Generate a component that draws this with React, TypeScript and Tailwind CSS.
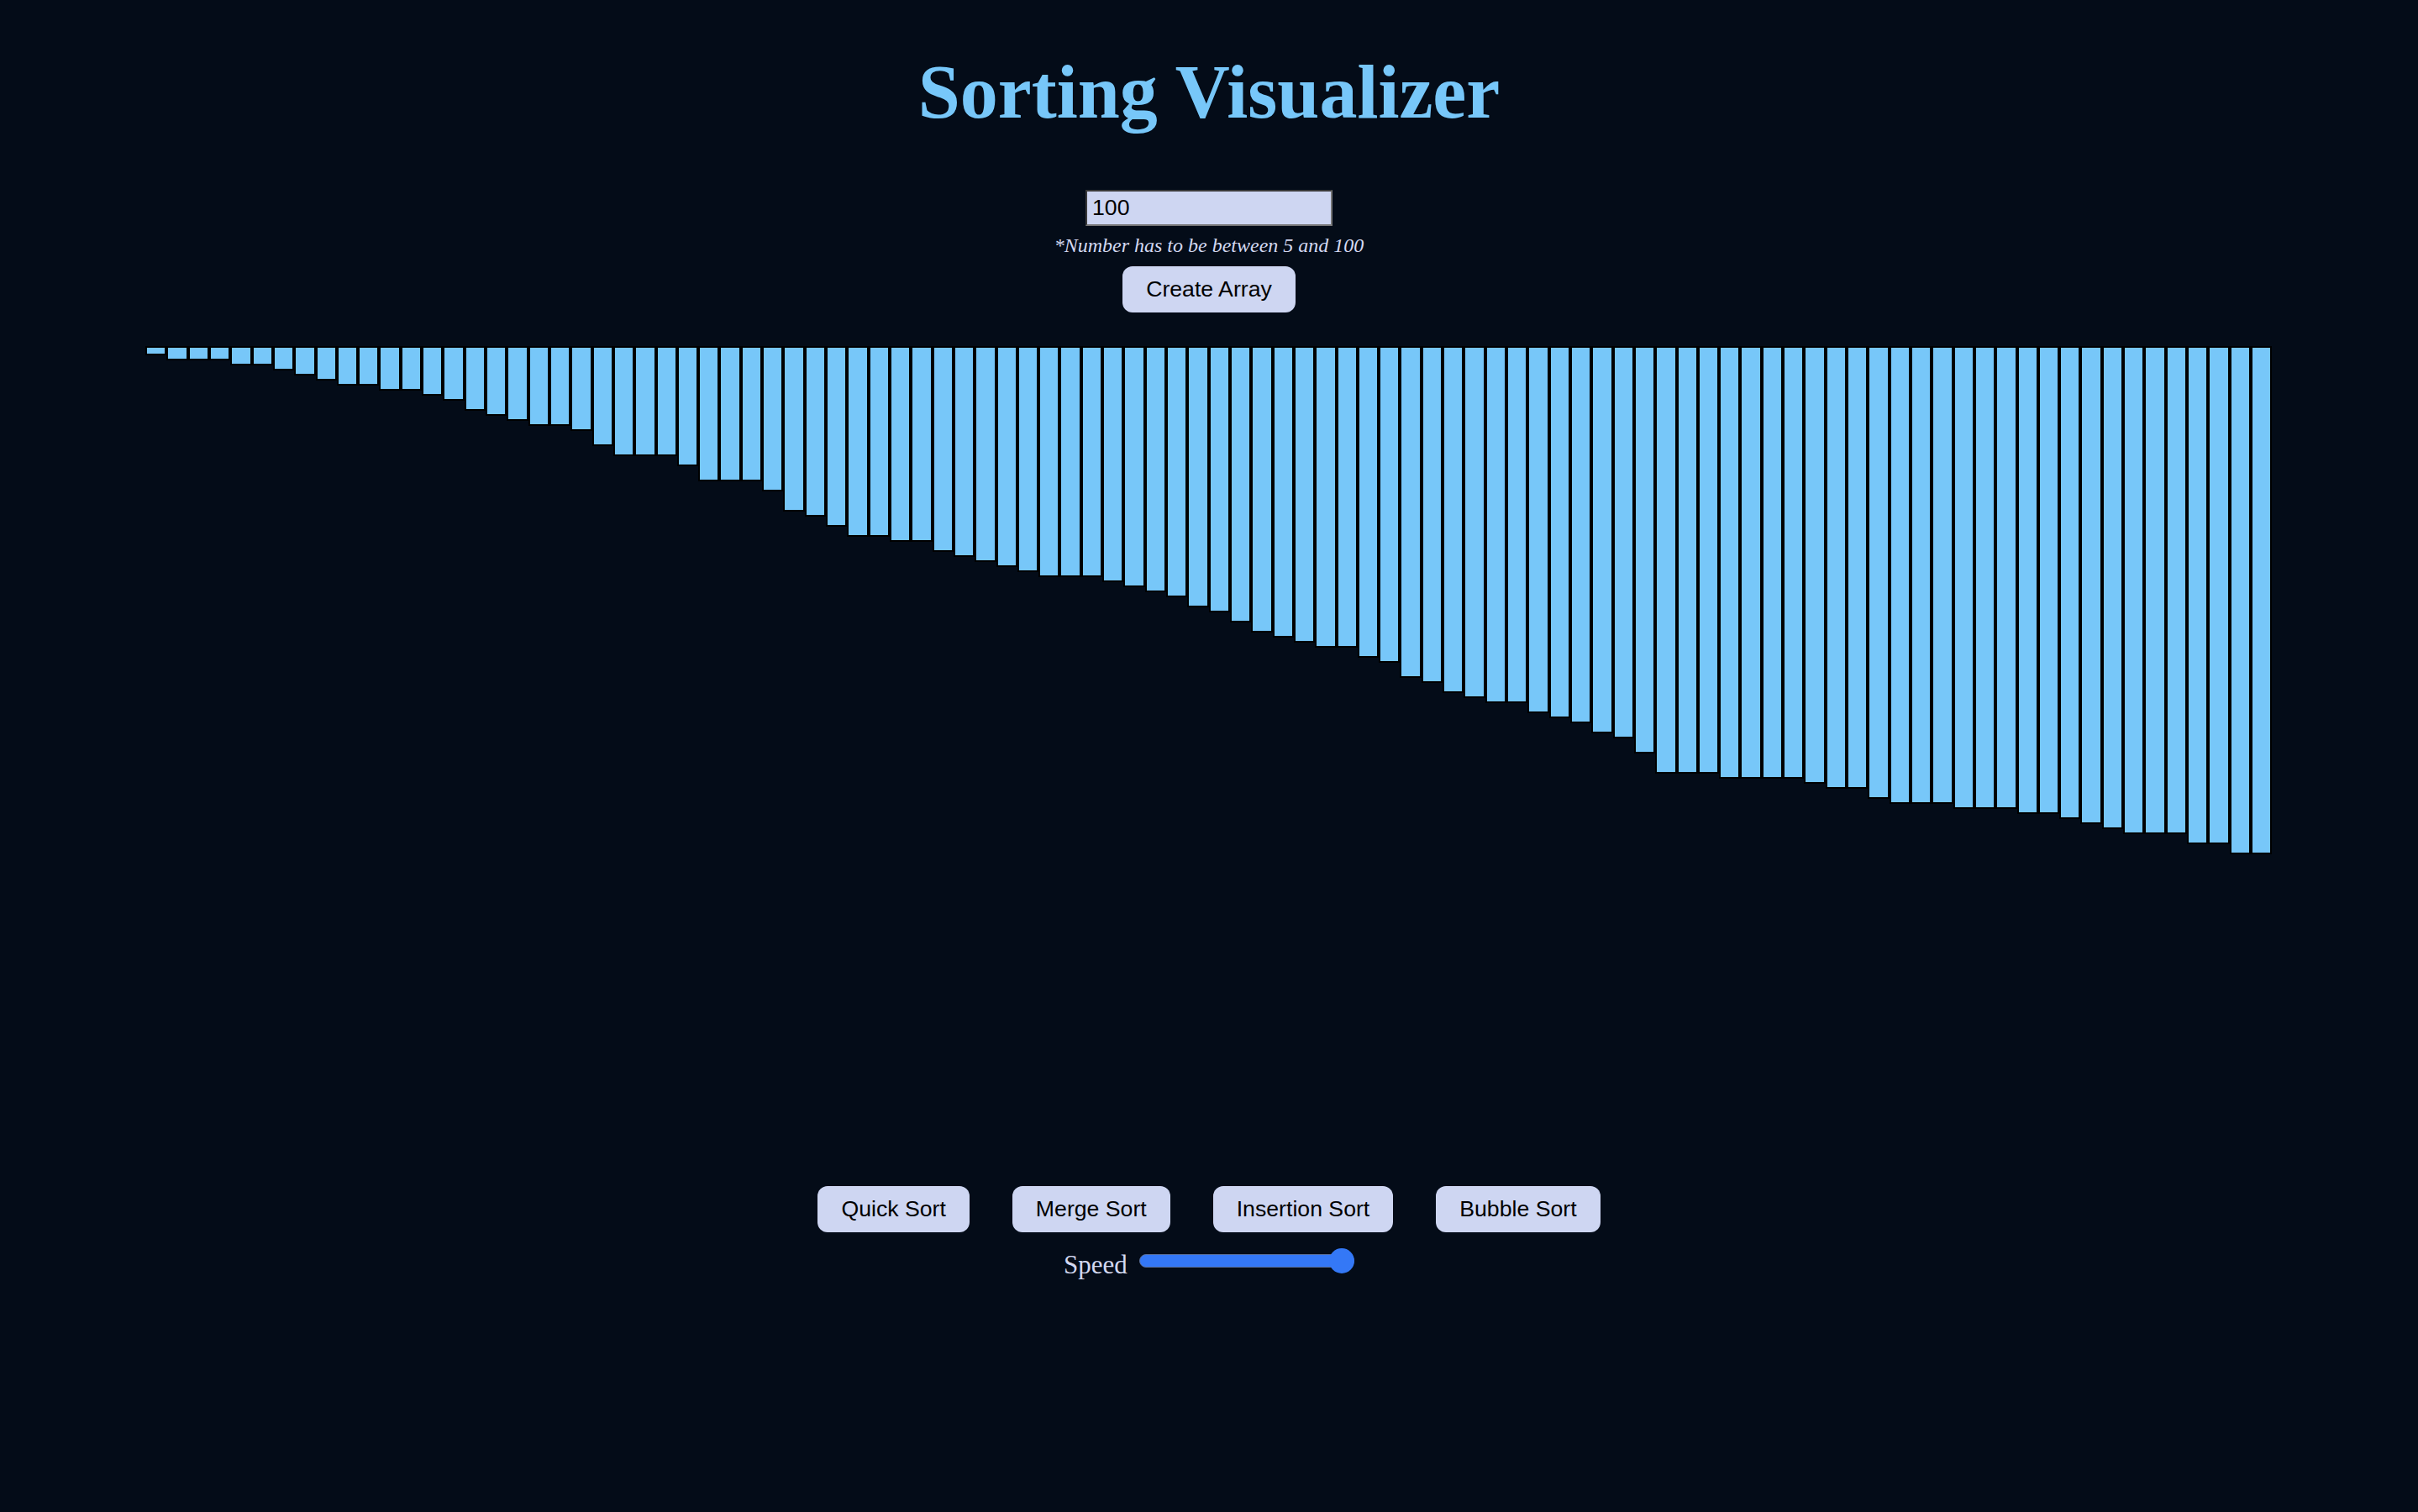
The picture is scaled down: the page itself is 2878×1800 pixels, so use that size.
const bars = [
  1, 2, 2, 2, 3, 3, 4, 5, 6, 7, 7, 8, 8, 9, 10, 12, 13, 14, 15, 15, 16,
  19, 21, 21, 21, 23, 26, 26, 26, 28, 32, 33, 35, 37, 37, 38, 38, 40, 41, 42, 43,
  44, 45, 45, 45, 46, 47, 48, 49, 51, 52, 54, 56, 57, 58, 59, 59, 61, 62, 65,
  66, 68, 69, 70, 70, 72, 73, 74, 76, 77, 80, 84, 84, 84, 85, 85, 85, 85, 86, 87, 87,
  89, 90, 90, 90, 91, 91, 91, 92, 92, 93, 94, 95, 96, 96, 96, 98, 98, 100, 100,
];

const algorithms = ["Quick Sort", "Merge Sort", "Insertion Sort", "Bubble Sort"];

function Button({ label }: { label: string }) {
  return (
    <button className="h-[55px] rounded-[12px] bg-[#ced6f2] px-7 text-[26.67px] leading-[31px] text-black [font-family:'Liberation_Sans',Arial,sans-serif]">
      {label}
    </button>
  );
}

export default function App() {
  return (
    <div className="flex min-h-screen w-full flex-col items-center bg-[#040c18] pt-[65px]">
      <h1 className="text-[90px] font-bold leading-none text-[#77c7f9] [font-family:'Liberation_Serif','Times_New_Roman',serif]">
        Sorting Visualizer
      </h1>

      <input
        type="text"
        defaultValue="100"
        className="mt-[71px] h-[43px] w-[294px] border-2 border-t-[#3a3a3a] border-l-[#3a3a3a] border-b-[#767676] border-r-[#767676] bg-[#ced6f2] px-[6px] text-[26.67px] text-black outline-none [font-family:'Liberation_Sans',Arial,sans-serif]"
      />
      <p className="mt-[11px] text-[24px] italic leading-[25px] text-[#d3d9f1] [font-family:'Liberation_Serif','Times_New_Roman',serif]">
        *Number has to be between 5 and 100
      </p>
      <div className="mt-[12px] flex">
        <Button label="Create Array" />
      </div>

      <div className="mt-[40px] flex h-[1000px] w-[2532px] items-start">
        {bars.map((v, i) => (
          <div
            key={i}
            className="flex-1 border-2 border-black bg-[#77c7f9]"
            style={{ height: v * 6 + 5 }}
          />
        ))}
      </div>

      <div className="flex gap-[51px]">
        {algorithms.map((a) => (
          <Button key={a} label={a} />
        ))}
      </div>

      <div className="mt-[19px] flex items-start gap-[14px]">
        <span className="mt-[2px] text-[31px] leading-[36px] text-[#d3d9f1] [font-family:'Liberation_Serif','Times_New_Roman',serif]">
          Speed
        </span>
        <div className="relative flex h-[30px] w-[256px] items-center">
          <div className="h-4 w-full rounded-full border border-[#5a6f9a] bg-[#3478f6]" />
          <div className="absolute right-0 top-0 h-[30px] w-[30px] rounded-full bg-[#3478f6]" />
        </div>
      </div>
    </div>
  );
}
